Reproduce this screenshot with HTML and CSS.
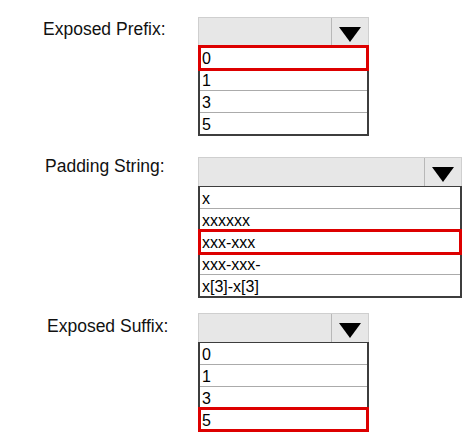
FILE: index.html
```html
<!DOCTYPE html>
<html lang="en">
<head>
<meta charset="utf-8">
<title>Exposed settings</title>
<link rel="stylesheet" href="styles.css">
</head>
<body>
<div class="form">
  <div class="field field--prefix">
    <div class="label">Exposed Prefix:</div>
    <div class="combo">
      <div class="combo-head">
        <div class="combo-value"></div>
        <div class="combo-btn"><svg width="22" height="15" viewBox="0 0 22 15"><polygon points="0,0 22,0 11,15" fill="#000"/></svg></div>
      </div>
      <ul class="combo-list">
        <li class="opt opt--selected">0</li>
        <li class="opt">1</li>
        <li class="opt">3</li>
        <li class="opt">5</li>
      </ul>
    </div>
  </div>
  <div class="field field--padding">
    <div class="label">Padding String:</div>
    <div class="combo combo--wide">
      <div class="combo-head">
        <div class="combo-value"></div>
        <div class="combo-btn"><svg width="22" height="15" viewBox="0 0 22 15"><polygon points="0,0 22,0 11,15" fill="#000"/></svg></div>
      </div>
      <ul class="combo-list">
        <li class="opt">x</li>
        <li class="opt">xxxxxx</li>
        <li class="opt opt--selected">xxx-xxx</li>
        <li class="opt">xxx-xxx-</li>
        <li class="opt">x[3]-x[3]</li>
      </ul>
    </div>
  </div>
  <div class="field field--suffix">
    <div class="label">Exposed Suffix:</div>
    <div class="combo">
      <div class="combo-head">
        <div class="combo-value"></div>
        <div class="combo-btn"><svg width="22" height="15" viewBox="0 0 22 15"><polygon points="0,0 22,0 11,15" fill="#000"/></svg></div>
      </div>
      <ul class="combo-list">
        <li class="opt">0</li>
        <li class="opt">1</li>
        <li class="opt">3</li>
        <li class="opt opt--selected">5</li>
      </ul>
    </div>
  </div>
</div>
</body>
</html>
```
FILE: styles.css
```css
body {
  margin: 0;
  background: #fff;
  font-family: "Liberation Sans", Arial, sans-serif;
  font-size: 16px;
  color: #000;
}

.form {
  display: flex;
  flex-direction: column;
  padding-top: 17px;
}

.field {
  display: flex;
  align-items: flex-start;
}

.field--padding {
  margin-top: 21px;
}

.field--suffix {
  margin-top: 15px;
}

.label {
  box-sizing: border-box;
  width: 198px;
  font-size: 17.5px;
  line-height: 18px;
  color: #111;
}

.field--prefix .label {
  padding-left: 43px;
  padding-top: 3px;
}

.field--padding .label {
  padding-left: 45px;
  padding-top: 0;
}

.field--suffix .label {
  padding-left: 47px;
  padding-top: 4px;
}

.combo {
  width: 171px;
}

.combo--wide {
  width: 264px;
}

.combo-head {
  display: flex;
  height: 29px;
  box-sizing: border-box;
  border: 1px solid #cfcfcf;
  border-bottom: none;
  background: #e7e7e7;
}

.combo-value {
  flex: 1;
  border-right: 1px solid #b8b8b8;
}

.combo-btn {
  width: 36px;
  display: flex;
  justify-content: center;
  align-items: flex-start;
  padding-top: 9px;
}

.combo-list {
  list-style: none;
  margin: 0;
  padding: 0;
  border: 2px solid #3d3d3d;
  border-top-width: 1px;
  background: #fff;
}

.opt {
  height: 18px;
  padding: 3px 0 0 2px;
  line-height: 18px;
  border-bottom: 1px solid #ababab;
}

.opt:last-child {
  border-bottom: none;
}

.opt--selected {
  outline: 3px solid #dd0000;
  outline-offset: -1px;
  position: relative;
}
```
